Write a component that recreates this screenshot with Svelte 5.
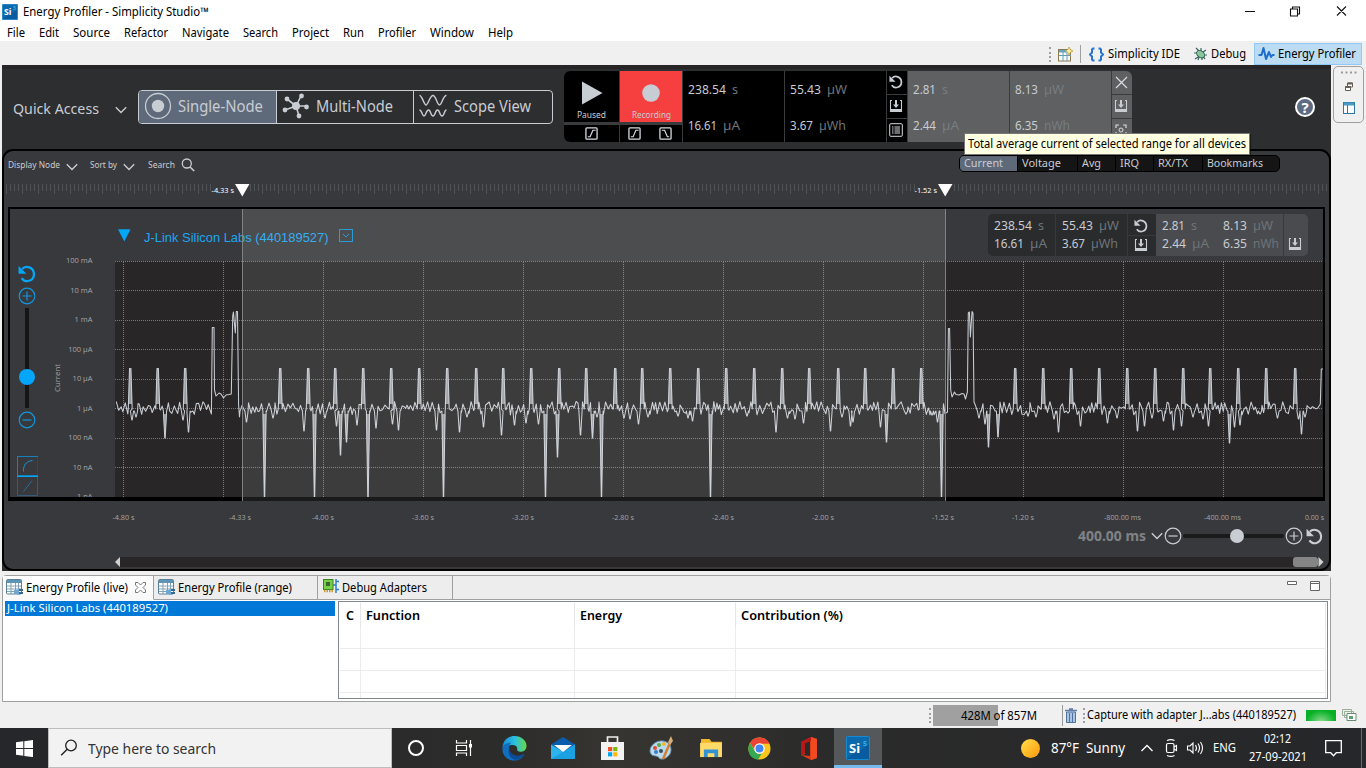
<script>
  // Squeezes or widens a run of text to the width its slot allows.
  function fit(node, width) {
    const exact = node.getBoundingClientRect().width;
    if (!exact || !width) return;
    node.style.transform = `scaleX(${width / exact})`;
    node.style.marginRight = `${width - exact}px`;
  }

  const menus = [['File', 18, 14], ['Edit', 20, 14], ['Source', 37, 14], ['Refactor', 44, 14], ['Navigate', 47, 14], ['Search', 35, 14], ['Project', 37, 14], ['Run', 21, 14], ['Profiler', 38, 14], ['Window', 44, 14], ['Help', 25, 0]];
  const series = [['Current', 58, 39], ['Voltage', 60, 39], ['Avg', 38, 19], ['IRQ', 38, 19], ['RX/TX', 49, 30], ['Bookmarks', 77, 56]];
  const yLabels = ['100 mA', '10 mA', '1 mA', '100 µA', '10 µA', '1 µA', '100 nA', '10 nA', '1 nA'];
  const yLines = [261.5, 290.5, 320.5, 349.5, 379.5, 408.5, 438.5, 467.5];
  const xLines = Array.from({ length: 12 }, (_, i) => 123.5 + i * 100);
  const times = [['-4.80 s', 123.5, 22], ['-4.33 s', 240, 22], ['-4.00 s', 323, 22], ['-3.60 s', 423, 22], ['-3.20 s', 523, 22], ['-2.80 s', 623, 22], ['-2.40 s', 723, 22], ['-2.00 s', 823, 22], ['-1.52 s', 943, 22], ['-1.20 s', 1023, 22], ['-800.00 ms', 1122.5, 37], ['-400.00 ms', 1222.5, 37], ['0.00 s', 1314.5, 19]];
  const ticks = Array.from({ length: 331 }, (_, i) => i);

  const peaks = [130, 157.5, 185, 280, 308, 335, 363, 391, 419, 447, 476, 503, 531, 559, 586, 615, 642, 670, 698, 726, 754, 782, 809, 838, 865, 893, 921, 1015, 1043, 1071, 1099, 1127, 1155, 1183, 1210, 1238, 1266, 1295];
  const dips = [[132, 420], [136, 417], [165, 438], [183, 420], [188.5, 432], [246.5, 422], [264.5, 497], [273, 418], [304, 431], [314.5, 497], [325, 418], [336.5, 426], [340.5, 455], [346.5, 442], [357, 425], [368, 497], [376, 428], [392.5, 424], [398.5, 430], [436.5, 430], [443.5, 497], [459.5, 432], [467, 417], [483.5, 427], [501.5, 435], [514.5, 425], [526, 423], [538.5, 424], [545.5, 497], [557.5, 457], [580.5, 435], [592.5, 438], [597, 417], [601.5, 497], [624, 418], [630, 419], [638.5, 424], [648, 417], [678, 416], [688, 418], [692.5, 421], [710.5, 497], [747, 416], [776, 432], [787.5, 418], [795, 419], [803.5, 423], [830.5, 431], [842, 417], [850.5, 426], [853, 422], [880.5, 427], [886.5, 442], [906, 414], [932, 415], [937.5, 422], [941.5, 497], [979, 418], [985, 424], [988.5, 447], [998, 437], [1028, 416], [1036, 417], [1054, 419], [1058.5, 432], [1068, 413], [1080.5, 426], [1107.5, 423], [1117, 418], [1137.5, 431], [1144.5, 426], [1152, 418], [1163.5, 421], [1173.5, 430], [1181.5, 426], [1193, 417], [1203, 419], [1208.5, 426], [1229.5, 443], [1234.5, 427], [1240, 425], [1260, 414], [1277.5, 418], [1298.5, 419], [1301.5, 434], [1305, 417]];

  // The current trace: quiet baseline around 1 µA, advertising peaks, sleep dips.
  function buildTrace() {
    let seed = 4187;
    const rnd = () => (seed = (seed * 16807) % 2147483647) / 2147483647;
    const events = [
      ...peaks.map((x) => ({ from: x - 2, to: x + 3, pts: [[x - 1.7, 409], [x - 0.5, 368.5], [x + 0.9, 368.5], [x + 2.2, 409]] })),
      ...dips.map(([x, y]) => ({ from: x - 2, to: x + 2, pts: [[x - 1.6, 411], [x - 0.2, y], [x + 0.2, y], [x + 1.6, 411]] })),
      { from: 210, to: 240, pts: [[211.4, 414], [212.3, 327.5], [214, 327.5], [214.5, 390], [216, 396], [219, 393], [221, 394], [223.5, 398], [226, 395], [229, 394.5], [231.3, 394], [232.7, 316], [233.4, 312], [235.3, 333], [236.3, 311.5], [237.5, 311.5], [238.6, 405], [239.5, 417]] },
      { from: 946, to: 975, pts: [[947.5, 412], [948.4, 328.5], [949.6, 328.5], [950.7, 390], [952, 397], [954.5, 392], [956, 394.5], [959, 395], [962, 393.5], [964, 394], [965.5, 399], [967.4, 392], [968.3, 313], [969.4, 312], [970.4, 337], [972, 311.5], [973, 313], [974, 402]] }
    ].sort((a, b) => a.from - b.from);
    const out = [];
    let x = 116.3;
    let high = true;
    for (const e of events) {
      while (x < e.from) {
        out.push([x, high ? 401.5 + rnd() * 5.5 : 407.5 + rnd() * 7.5]);
        high = rnd() < 0.82 ? !high : high;
        x += 1.3 + rnd() * 1.5;
      }
      out.push(...e.pts);
      x = Math.max(x, e.to);
    }
    while (x < 1319) {
      out.push([x, 405 + rnd() * 4]);
      x += 1.8;
    }
    out.push([1320.3, 404], [1321.3, 369], [1323, 369]);
    return 'M' + out.map((p) => p[0].toFixed(1) + ' ' + p[1].toFixed(1)).join('L');
  }
  const trace = buildTrace();
  const stems = peaks.map((x) => `M${x - 1.6} 404 ${x - 0.6} 368h1.700L${x + 2.1} 404z`).join('')
    + dips.filter((d) => d[1] > 435).map(([x, y]) => `M${x - 1.7} 414L${x - 0.3} ${y}h.6L${x + 1.7} 414z`).join('');
</script>

{#snippet t(text, w)}<span class="fit" use:fit={w}>{text}</span>{/snippet}

{#snippet reading(value, unit, vw, uw)}<span class="reading">{@render t(value, vw)}<span class="unit">{@render t(unit, uw)}</span></span>{/snippet}

{#snippet chevron()}<svg width="12" height="8" viewBox="0 0 12 8"><path d="M.8 1.2 6 6.4l5.2-5.2" fill="none" stroke="currentColor" stroke-width="1.4" /></svg>{/snippet}

{#snippet undo(size)}<svg width={size} height={size} viewBox="0 0 16 16"><path d="M3.6 3.6C7-.2 14 2 14.200 8c0 6.300-7.600 8.600-11 3.600" fill="none" stroke="currentColor" stroke-width="2" /><path d="M.5.8v7h7z" fill="currentColor" /></svg>{/snippet}

{#snippet save()}<svg width="14" height="14" viewBox="0 0 14 14"><path d="M3 1.500H1.500v11h11v-11H11" fill="none" stroke="currentColor" stroke-width="1.100" /><path d="M1 10h12v3H1zM6 1h2v4.500h2L7 9 4 5.500h2z" fill="currentColor" /></svg>{/snippet}

{#snippet edge(falling)}<svg width="13" height="13" viewBox="0 0 14 14"><rect x="1" y="1" width="12" height="12" rx="1" fill="none" stroke="#d7dae0" stroke-width="1.400" /><path d={falling ? 'M3 3.500h3l3 7h2' : 'M3 10.500h2.500l3-7h3'} fill="none" stroke="#d7dae0" stroke-width="1.300" /></svg>{/snippet}

{#snippet circle(plus)}<svg width="18" height="18" viewBox="0 0 18 18"><circle cx="9" cy="9" r="7.800" fill="none" stroke="currentColor" stroke-width="1.200" /><path d={plus ? 'M4.500 9h9M9 4.500v9' : 'M4.500 9h9'} stroke="currentColor" stroke-width="1.200" /></svg>{/snippet}

{#snippet tableIcon()}<svg width="17" height="17" viewBox="0 0 17 17"><rect x=".5" y=".5" width="15" height="14.500" rx="1" fill="#fff" stroke="#5a7f96" /><path d="M1 1h14v3H1z" fill="#5c95b5" /><path d="M1 7h14M1 10h14M1 12.500h9M5 4v11M9.500 4v11M12.500 4v6" stroke="#83a3b5" stroke-width="1" /><path d="M8 11h3l2-2v7l-2-1H8z" fill="#6ca6d5" /><path d="M13 11h4M13 14h4" stroke="#356b91" stroke-width="2" /></svg>{/snippet}

{#snippet siLogo(size)}<svg width={size} height={size} viewBox="0 0 24 24"><rect x=".5" y=".5" width="23" height="23" rx="1" fill="#075b9e" stroke="#1789d1" /><path d="M1 1h22v8L1 22z" fill="#147abd" opacity=".45" /><text x="3" y="16.500" font-family="Noto Sans, sans-serif" font-weight="bold" font-size="13" fill="#fff">Si</text><text x="17" y="9.500" font-family="Noto Sans, sans-serif" font-weight="bold" font-size="7" fill="#31aee9">5</text></svg>{/snippet}

<div class="screen">
  <header class="title">
    {@render siLogo(16)}
    <span class="caption">{@render t('Energy Profiler - Simplicity Studio™', 186)}</span>
    <svg class="winctl" width="110" height="22" viewBox="1244 0 110 22"><path d="M1245 10.500h10M1337 5.500l9 9m0-9l-9 9M1290.500 8h7v7h-7zM1292.500 8V6h7v7h-2" fill="none" stroke="#111" stroke-width="1.100" /></svg>
  </header>
  <nav class="menu">
    {#each menus as [name, w, gap]}<span style:margin-right="{gap}px">{@render t(name, w)}</span>{/each}
  </nav>
  <div class="perspectives">
    <span class="grip"></span>
    <svg class="newp" width="15" height="15" viewBox="0 0 15 15"><rect x=".5" y="2.500" width="12" height="11.500" fill="#f7fbff" stroke="#8a7a4d" /><path d="M1 3h8v2.500H1z" fill="#62a4c7" /><path d="M1 8.500h12M5 5v9M9 5v9" stroke="#699cb2" /><path d="m11 0 1.300 2.700L15 4l-2.700 1.300L11 8 9.700 5.300 7 4l2.700-1.300z" fill="#fff3a8" stroke="#ba942e" stroke-width=".7" /></svg>
    <span class="vr"></span>
    <svg class="braces" width="15" height="15" viewBox="0 0 15 15"><path d="M5.500 1.500H4L3 2.500v3L1 7.500l2 2v3l1 1h1.500M9.500 1.500H11l1 1v3l2 2-2 2v3l-1 1H9.500" fill="none" stroke="#2576d2" stroke-width="2" /></svg>
    {@render t('Simplicity IDE', 72)}
    <svg class="bug" width="15" height="14" viewBox="0 0 15 14"><path d="M3 1l3 3M1 6h4M2 12l3-2M8 1v3M13 3l-3 2M14 8h-4M9 13v-3M5 13l1-3M12 12l-2-3" stroke="#3d6360" stroke-width="1.200" /><ellipse cx="7.600" cy="7.200" rx="4.400" ry="3.200" transform="rotate(38 7.600 7.200)" fill="#8cc59b" stroke="#31665a" /></svg>
    {@render t('Debug', 35)}
    <span class="active">
      <svg width="17" height="16" viewBox="0 0 17 16"><path d="M.5 9h3L5.500 2 8 13l3-7 2 5 1.500-2H16.500" fill="none" stroke="#1d6ecf" stroke-width="2" stroke-linejoin="round" /></svg>
      {@render t('Energy Profiler', 78)}
    </span>
  </div>

  <div class="workspace">
    <main class="profiler">
      <div class="toolbar">
        <div class="quick">{@render t('Quick Access', 86)}<i>{@render chevron()}</i></div>
        <div class="modes">
          <div class="mode on">
            <svg width="28" height="28" viewBox="0 0 28 28"><circle cx="14" cy="14" r="12.500" fill="none" stroke="#c8ccd3" stroke-width="1.300" /><circle cx="14" cy="14" r="6.200" fill="#c8ccd3" /></svg>
            {@render t('Single-Node', 85)}
          </div>
          <div class="mode">
            <svg width="28" height="28" viewBox="0 0 28 28"><path d="M14 14 5 7M14 14l5-10M14 14h11M14 14l3 10M14 14 3 18" stroke="#c8ccd3" stroke-width="1.600" /><g fill="#c8ccd3"><circle cx="14" cy="14" r="4" /><circle cx="5" cy="7" r="2.400" /><circle cx="19.500" cy="4" r="2.400" /><circle cx="24.500" cy="15" r="2.400" /><circle cx="17" cy="24" r="2.400" /><circle cx="3" cy="18" r="2.400" /></g></svg>
            {@render t('Multi-Node', 77)}
          </div>
          <div class="mode">
            <svg width="28" height="28" viewBox="0 0 28 28"><path d="M.5 3.500C3 3 5 13 7 13S11 3.500 14 3.500 18 13 20.500 13 24 3 27.500 3.500M.5 18c2.500 0 2.500 6 4.500 6s2-6 4.500-6 2 6 4.500 6 2-6 4.500-6 2 6 4.500 6 2-6 4.500-6" fill="none" stroke="#c8ccd3" stroke-width="1.400" /></svg>
            {@render t('Scope View', 77)}
          </div>
        </div>
        <div class="record">
          <div class="states">
            <div class="state paused"><svg width="22" height="24" viewBox="0 0 22 24"><path d="M1 .5v23L21.500 12z" fill="#c8ccd3" /></svg>{@render t('Paused', 29)}</div>
            <div class="state rec"><svg width="22" height="24" viewBox="0 0 22 24"><circle cx="11" cy="12" r="8.800" fill="#c8ccd3" /></svg>{@render t('Recording', 39)}</div>
            <div class="trig">{@render edge(false)}</div>
            <div class="trig two">{@render edge(false)}{@render edge(true)}</div>
          </div>
          <div class="total">{@render reading('238.54', 's', 38, 6)}{@render reading('16.61', 'µA', 29, 17)}</div>
          <div class="total">{@render reading('55.43', 'µW', 31, 20)}{@render reading('3.67', 'µWh', 23, 27)}</div>
          <div class="acts"><div>{@render undo(14)}</div><div>{@render save()}</div><div><svg width="14" height="14" viewBox="0 0 14 14"><rect x=".7" y=".7" width="12.600" height="12.600" rx="1" fill="none" stroke="#d7dae0" /><path d="M3 4h1.500M3 6h1.500M3 8h1.500M3 10h1.500M5.500 4H11M5.500 6H11M5.500 8H11M5.500 10H11" stroke="#d7dae0" /></svg></div></div>
          <div class="total range">{@render reading('2.81', 's', 23, 6)}{@render reading('2.44', 'µA', 23, 17)}</div>
          <div class="total range">{@render reading('8.13', 'µW', 23, 20)}{@render reading('6.35', 'nWh', 23, 26)}</div>
          <div class="acts range"><div><svg width="13" height="13" viewBox="0 0 13 13"><path d="m1 1 11 11M12 1 1 12" stroke="#d7dae0" stroke-width="1.200" /></svg></div><div>{@render save()}</div><div><svg width="12" height="12" viewBox="0 0 12 12"><path d="M4 1H1v3M8 1h3v3M1 8v3h3M11 8v3H8" fill="none" stroke="#d7dae0" stroke-width="1.200" /><circle cx="6" cy="6" r="2" fill="none" stroke="#d7dae0" /></svg></div></div>
        </div>
        <div class="help">?</div>
      </div>

      <section class="panel">
        <div class="filters">
          {@render t('Display Node', 52)}<i>{@render chevron()}</i>
          <span class="sort">{@render t('Sort by', 27)}</span><i>{@render chevron()}</i>
          <span class="find">{@render t('Search', 27)}</span>
          <svg class="lens" width="14" height="14" viewBox="0 0 14 14"><circle cx="5.800" cy="5.500" r="4.500" fill="none" stroke="#c8ccd3" stroke-width="1.300" /><path d="m9 9 4.200 4" stroke="#c8ccd3" stroke-width="1.700" /></svg>
          <div class="series">
            {#each series as [name, w, tw], i}<div class:on={i === 0} style:width="{w}px">{@render t(name, tw)}</div>{/each}
          </div>
        </div>
        <svg class="ruler" width="1325" height="26" viewBox="4 181 1325 26">
          {#each ticks as k}{#if !(k > 51 && k < 61) && !(k > 227 && k < 237)}<path d="M{6.5 + k * 4} 184v{k % 4 ? 7 : 10}" stroke="#515256" />{/if}{/each}
          <path d="M235 184h14.500L242.300 196.500z M938 184h14.500l-7.300 12.500z" fill="#fff" />
          <text x="211.500" y="193" textLength="22.500" lengthAdjust="spacingAndGlyphs" class="mark">-4.33 s</text>
          <text x="914.500" y="193" textLength="22.500" lengthAdjust="spacingAndGlyphs" class="mark">-1.52 s</text>
        </svg>

        <div class="chart">
          <svg class="plot" width="1313" height="292" viewBox="10 209 1313 292">
            <path d="M10 209h1313v288H10z" fill="#38393c" />
            <path d="M115 261h1208v236H115z" fill="#282627" />
            <path d="M118 229.300h12.500L124.300 241.500z" fill="#04a6fa" />
            <text x="144" y="241.500" class="device" textLength="184.500" lengthAdjust="spacingAndGlyphs">J-Link Silicon Labs (440189527)</text>
            <rect x="339.500" y="229.500" width="13" height="12" fill="none" stroke="#158fd3" /><path d="m343 234 3 3 3-3" fill="none" stroke="#158fd3" />
            <g stroke="#79787a" stroke-dasharray="1 1">
              {#each yLines as y}<path d="M115 {y}h1208" />{/each}
              {#each xLines as x}<path d="M{x} 262v235" />{/each}
            </g>
            <path d={stems} fill="#989b9e" />
            <path d={trace} fill="none" stroke="#c9ced4" stroke-width="1.050" stroke-linejoin="round" />
            {#each yLabels as label, i}<text x="92.500" y={263 + i * 29.5} text-anchor="end" class="scale">{label}</text>{/each}
            <text transform="translate(59.500 392) rotate(-90)" class="scale" textLength="28" lengthAdjust="spacingAndGlyphs">Current</text>
            <path d="M10 497h1313v4H10z" fill="#000" />
            <path d="M242 209h704v292H242z" fill="#fff" opacity=".1" />
            <path d="M242.500 209v292M945.500 209v292" stroke="#808183" />
          </svg>
          <div class="zoomer">
            {@render undo(18)}
            {@render circle(true)}
            <div class="vtrack"><b></b></div>
            {@render circle(false)}
            <div class="curves">
              <svg width="21" height="20" viewBox="0 0 21 20"><rect x=".5" y=".5" width="20" height="19" fill="none" stroke="#1680bf" /><path d="M20.500 1v18" stroke="#443870" /><path d="M6.500 15.500C6 10 9 5 15.500 4.500" fill="none" stroke="#1496df" /></svg>
              <svg width="21" height="20" viewBox="0 0 21 20"><path d="M.5 0v19.500h20V0" fill="none" stroke="#355b7b" /><path d="M0 .5h21" stroke="#04a6fa" /><path d="M6.500 15.500 15 4.500" stroke="#276d99" /></svg>
            </div>
          </div>
          <div class="readout">
            <div class="cell c1">{@render reading('238.54', 's', 38, 6)}{@render reading('16.61', 'µA', 30, 17)}</div>
            <div class="cell c2">{@render reading('55.43', 'µW', 31, 20)}{@render reading('3.67', 'µWh', 23, 27)}</div>
            <div class="tools"><div>{@render undo(14)}</div><div>{@render save()}</div></div>
            <div class="cell lit c3">{@render reading('2.81', 's', 23, 6)}{@render reading('2.44', 'µA', 24, 17)}</div>
            <div class="cell lit c4">{@render reading('8.13', 'µW', 24, 20)}{@render reading('6.35', 'nWh', 24, 26)}</div>
            <div class="keep">{@render save()}</div>
          </div>
        </div>

        <svg class="axis" width="1325" height="24" viewBox="4 501 1325 24">
          {#each times as [label, x, w]}<text {x} y="519.800" text-anchor="middle" textLength={w} lengthAdjust="spacingAndGlyphs" class="scale">{label}</text>{/each}
        </svg>
        <div class="hzoom">
          <strong>{@render t('400.00 ms', 68)}</strong><i>{@render chevron()}</i>
          {@render circle(false)}<div class="htrack"><b></b></div>{@render circle(true)}
          <span class="hundo">{@render undo(17)}</span>
        </div>
        <div class="scroll"><svg width="5" height="10" viewBox="0 0 5 10"><path d="M5 0v10L0 5z" fill="#d0d0d0" /></svg><div class="track"><b></b></div><svg width="6" height="10" viewBox="0 0 6 10"><path d="M.5 0v10l5-5z" fill="#d0d0d0" /></svg></div>
      </section>
      <div class="tooltip">{@render t('Total average current of selected range for all devices', 278)}</div>
    </main>
    <aside>
      <div class="dock">
        <svg width="29" height="56" viewBox="1334 67 29 56"><path d="M1341 72.500h16" stroke="#999" stroke-width="2" stroke-dasharray="2 2.500" /><g fill="#fff" stroke="#665f57"><path d="M1347.500 83h5v4h-5z" /><path d="M1347.500 83.500h5" stroke-width="2" /><path d="M1345.500 86.500h5v4h-5z" /><path d="M1345.500 87h5" stroke-width="2" /></g><rect x="1343.500" y="102.500" width="11" height="11" fill="#fff" stroke="#2e779f" /><path d="M1344 104h10" stroke="#499bc4" stroke-width="3" /><path d="M1347.500 105v8" stroke="#2e779f" /></svg>
      </div>
    </aside>
  </div>

  <div class="views">
    <div class="tabs">
      <div class="tab live">{@render tableIcon()}{@render t('Energy Profile (live)', 102)}<svg class="x" width="11" height="11" viewBox="0 0 11 11"><path d="M.500.500h2.500L5.500 3 8 .5h2.500V3L8 5.500 10.500 8v2.500H8L5.500 8 3 10.500H.5V8L3 5.500.5 3z" fill="#fff" stroke="#777" /></svg></div>
      <div class="tab rng">{@render tableIcon()}{@render t('Energy Profile (range)', 114)}</div>
      <div class="tab dbg"><svg width="16" height="15" viewBox="0 0 16 15"><rect x=".5" y=".5" width="9.500" height="10" fill="#78cf43" stroke="#368425" /><rect x="3" y="3" width="4" height="4" fill="#3d653b" /><path d="M1 12h9" stroke="#c69b31" stroke-width="2.500" stroke-dasharray="1.500 1" /><path d="M13 0v14M10 6h3M13 2.500h3M13 10.500h3" stroke="#2c80cd" stroke-width="1.500" /></svg>{@render t('Debug Adapters', 85)}</div>
      <svg class="minmax" width="34" height="12" viewBox="0 0 34 12"><path d="M.500 1.500h9v3h-9zM23.500 1.500h9v9h-9zM23.500 3.500h9" fill="#fff" stroke="#666" /></svg>
    </div>
    <div class="content">
      <div class="list"><div class="picked">{@render t('J-Link Silicon Labs (440189527)', 161)}</div></div>
      <div class="grid">
        <div class="head"><span>{@render t('C', 8)}</span><span>{@render t('Function', 54)}</span><span>{@render t('Energy', 42)}</span><span>{@render t('Contribution (%)', 102)}</span></div>
        {#each [0, 1, 2, 3] as r}<div class="row"><span></span><span></span><span></span><span></span></div>{/each}
      </div>
    </div>
  </div>

  <div class="status">
    <span class="grip"></span>
    <div class="heap">{@render t('428M of 857M', 76)}</div>
    <svg class="bin" width="12" height="15" viewBox="0 0 12 15"><path d="M0 2.500h12M4 1h4" stroke="#5d7fa8" stroke-width="1.500" /><path d="M1.500 4h9v10.500h-9z" fill="#aac5e2" stroke="#4f739e" /><path d="M4.500 5v9M7.500 5v9" stroke="#4f739e" /></svg>
    <span class="grip"></span>
    <span class="job">{@render t('Capture with adapter J...abs (440189527)', 209)}</span>
    <div class="progress"></div>
    <svg width="15" height="12" viewBox="0 0 15 12"><path d="M.500.500h9v6h-9zM2.500 2.500h9v6h-9z" fill="#edf2ed" stroke="#9aae9a" /><path d="M5 4.500h9v7H5z" fill="#fff" stroke="#688a72" /><path d="M7 7h4v3H7z" fill="#59a36b" /></svg>
  </div>

  <footer>
    <div class="start"><svg width="17" height="17" viewBox="0 0 17 17"><path d="M0 2.300 7.300 1.300v6.800H0zM8.300 1.200 17 0v8.100H8.300zM0 9h7.300v6.800L0 14.800zM8.300 9H17v8.100l-8.700-1.200z" fill="#fff" /></svg></div>
    <div class="search"><svg width="18" height="18" viewBox="0 0 18 18"><circle cx="11" cy="6.500" r="5.300" fill="none" stroke="#222" stroke-width="1.300" /><path d="m7.200 10.300-6 6" stroke="#222" stroke-width="1.400" /></svg>{@render t('Type here to search', 128)}</div>
    <div class="app"><svg width="18" height="18" viewBox="0 0 18 18"><circle cx="9" cy="9" r="7" fill="none" stroke="#fff" stroke-width="2" /></svg></div>
    <div class="app view"><svg width="18" height="18" viewBox="0 0 18 18"><path d="M1.500 1v3h10V1M1.500 17v-3h10v3M1.500 6.500h10v5h-10zM15.500 1v16" fill="none" stroke="#fff" stroke-width="1.200" /><path d="M14 5h3v3.500h-3z" fill="#fff" /></svg></div>
    <div class="app"><svg width="25" height="25" viewBox="0 0 24 24"><defs><linearGradient id="ed" x1="0" x2="1"><stop stop-color="#168bd5" /><stop offset=".5" stop-color="#29bfe2" /><stop offset="1" stop-color="#68d846" /></linearGradient></defs><path d="M.5 11C1 4 6 0 12 0c7 0 12 5 11.500 10-.5 4-3 5-6 5-2 0-3-1-3-2 1-4-4-5-7-4C4 9 2 12 .5 11z" fill="url(#ed)" /><path d="M.5 12C1 8 5 6 9 6.500c-4 3-3 11 4 12.500 4 1 7-1 8.500-2C19 23 13 24.500 8 23S0 17 .5 12z" fill="#126fc0" /><path d="M9.500 8.500C5 12 8 19 14 19c3 0 5-1 7.500-2-3 5-7 6.500-10 5.500C5 20 5 11 9.500 8.500z" fill="#0b4b97" /></svg></div>
    <div class="app"><svg width="24" height="22" viewBox="0 0 24 22"><path d="M0 7.500 12 0l12 7.500V22H0z" fill="#0b5cad" /><path d="M0 7.500 12 15l12-7.500V22H0z" fill="#2bb4ed" /><path d="M24 7.500V22H0z" fill="#1296dc" opacity=".65" /><path d="M3 8h18l-9 7z" fill="#fff" /></svg></div>
    <div class="app"><svg width="23" height="24" viewBox="0 0 23 24"><path d="M6.500 8V1h10v7" fill="none" stroke="#eee" stroke-width="1.700" /><path d="M0 6h23v18H0z" fill="#f2f2f2" /><path d="M7 11h4.200v4.200H7z" fill="#f25022" /><path d="M12.200 11h4.200v4.200h-4.200z" fill="#7fba00" /><path d="M7 16.200h4.200v4.200H7z" fill="#00a4ef" /><path d="M12.200 16.200h4.200v4.200h-4.200z" fill="#ffb900" /></svg></div>
    <div class="app"><svg width="25" height="25" viewBox="0 0 25 25"><path d="M2 11C6 4 16 3 20 8s2 13-6 15c-4 1-4-3-7-3-6 0-7-5-5-9z" fill="#b9dbed" stroke="#6792ac" /><circle cx="6" cy="12" r="2" fill="#dc4a38" /><circle cx="10" cy="9" r="2" fill="#55aa4b" /><circle cx="15" cy="8" r="2" fill="#efb832" /><circle cx="7" cy="16" r="2" fill="#427cc3" /><circle cx="12" cy="15" r="2" fill="#374d5b" /><path d="m14 23 7-16" stroke="#d47e31" stroke-width="2.500" /><path d="m19 6 3-6 2 5-3 4z" fill="#d7ad7a" /></svg></div>
    <div class="app"><svg width="22" height="19" viewBox="0 0 23 20"><path d="M1 0h9l2 3h11v15H1z" fill="#f2b82b" /><path d="M0 4h23v15H0z" fill="#ffda68" /><path d="M4 19v-8h15v8h-4v-4H8v4z" fill="#3292d6" /></svg></div>
    <div class="app"><svg width="23" height="23" viewBox="0 0 24 24"><circle cx="12" cy="12" r="11.500" fill="#fac51c" /><path d="M2 6C7-2 19-1 22.500 7H12a5 5 0 0 0-4.500 7z" fill="#ea4335" /><path d="M2 6 7.500 15c2 3 5 3 7 2l-4 6.500C2 23-2 14 2 6z" fill="#34a853" /><circle cx="12" cy="12" r="5.500" fill="#fff" /><circle cx="12" cy="12" r="4.200" fill="#4285f4" /></svg></div>
    <div class="app"><svg width="19" height="23" viewBox="0 0 19 23"><path d="M2 5 12 0l6 2v19l-6 2-10-5 9 1V4L6 6v11l-4 1z" fill="#e33b18" /><path d="M2 5 12 0v4L6 6v10l-4 2z" fill="#b61717" /><path d="m12 0 6 2v19l-6 2z" fill="#ef4a20" /></svg></div>
    <div class="app current">{@render siLogo(24)}</div>
    <div class="tray">
      <i class="sun"></i>
      <span class="weather">{@render t('87°F  Sunny', 74)}</span>
    </div>
    <svg class="trayicons" width="66" height="22" viewBox="1140 737 66 22"><path d="m1141.500 751 5.500-5.500 5.500 5.500" fill="none" stroke="#fff" stroke-width="1.300" /><rect x="1166.500" y="743.500" width="7.500" height="9" rx="1.500" fill="none" stroke="#fff" stroke-width="1.200" /><path d="M1174 747l2.500-1.500v5L1174 749M1167 740.500q4-1.800 7.500 0M1167 755.500q4 1.800 7.500 0" fill="none" stroke="#fff" stroke-width="1.100" /><path d="M1187.500 746h2.500l3-3v10l-3-3h-2.500zM1195.500 745q2 3 0 6M1198 743.500q3 4.500 0 9M1200.500 742q4 6 0 12" fill="none" stroke="#fff" stroke-width="1.100" /></svg>
    <span class="lang">{@render t('ENG', 23)}</span>
    <div class="clock">{@render t('02:12', 27)}{@render t('27-09-2021', 58)}</div>
    <svg class="note" width="17" height="17" viewBox="0 0 17 17"><path d="M.7.700h15.600v12h-5L8.500 15.800 5.700 12.700h-5z" fill="none" stroke="#fff" stroke-width="1.300" /></svg>
    <span class="peek"></span>
  </footer>
</div>

<style>
  :global(body) { overflow: hidden; }
  .screen { width: 1366px; height: 768px; display: flex; flex-direction: column; overflow: hidden; background: #f0f0f0; color: #000; font: 12px/16px "Noto Sans", "Open Sans", sans-serif; }
  .screen *, .screen { box-sizing: border-box; }
  svg { display: block; flex: none; }
  i { font-style: normal; }
  .fit { display: inline-block; white-space: pre; transform-origin: 0 50%; flex: none; }
  .title { height: 23px; display: flex; align-items: center; background: #fff; padding-left: 2px; }
  .caption { margin-left: 5px; display: flex; }
  .winctl { margin-left: auto; margin-right: 12px; }
  .menu { height: 18px; display: flex; align-items: center; background: #fff; padding: 2px 0 0 7px; }
  .menu span { display: flex; }
  .perspectives { height: 24px; display: flex; align-items: center; padding: 2px 4px 0 1049px; }
  .grip { width: 3px; height: 15px; border-left: 2px dotted #a0a0a0; flex: none; }
  .newp { margin-left: 6px; }
  .vr { width: 1px; height: 18px; background: #a0a0a0; margin: 0 8px 0 7px; }
  .braces { margin-right: 4px; }
  .bug { margin: 0 3px 0 13px; }
  .active { margin-left: auto; height: 22px; width: 108px; padding-left: 3px; display: flex; align-items: center; gap: 3px; background: #bcdcf4; border: 1px solid #90c8f6; }

  .workspace { display: flex; height: 506px; }
  .profiler { width: 1329px; margin-left: 2px; background: #2d2e30; color: #c8ccd3; position: relative; }
  .toolbar { height: 84px; border-top: 4px solid #272526; display: flex; align-items: flex-start; }
  .quick { width: 136px; padding: 27px 0 0 11px; font-size: 15px; line-height: 24px; display: flex; align-items: center; }
  .quick i { margin: 4px 0 0 16px; }
  .modes { display: flex; width: 415px; height: 34px; margin-top: 21px; border: 1px solid #c8ccd3; border-radius: 4px; overflow: hidden; font-size: 15.500px; line-height: 24px; }
  .mode { width: 138px; display: flex; align-items: center; gap: 6px; padding: 0 0 2px 5px; border-right: 1px solid #c8ccd3; }
  .mode:last-child { border-right: 0; gap: 7px; }
  .mode.on { background: #5e6a7a; }
  .record { display: flex; margin: 2px 0 0 11px; width: 568px; height: 71px; border-radius: 6px; overflow: hidden; background: #3a3b3d; font-size: 13px; line-height: 18px; }
  .states { display: grid; grid-template: 51px 17px / 55px 62px; gap: 3px 1px; width: 118px; }
  .state { background: #000; display: flex; flex-direction: column; align-items: center; padding-top: 10px; font-size: 9px; line-height: 20px; }
  .state.rec { background: #f5403f; }
  .trig { background: #000; display: flex; justify-content: center; align-items: center; gap: 18px; }
  .trig.two { padding-right: 2px; }
  .total { width: 101px; margin-left: 1px; background: #000; display: flex; flex-direction: column; gap: 18px; padding: 9px 0 0 5px; }
  .reading { display: flex; gap: 6px; }
  .unit { color: #6d7479; }
  .acts { width: 20px; margin-left: 1px; display: flex; flex-direction: column; gap: 1px; }
  .acts div { flex: 1; background: #000; display: flex; align-items: center; justify-content: center; padding: 0 2px 1px 0; }
  .total.range, .acts.range div { background: #5e6062; }
  .range .unit { color: #777d80; }
  .help { width: 20px; height: 20px; margin: 28px 0 0 163px; border: 2px solid #fff; border-radius: 50%; background: #5e6c83; color: #fff; font: bold 15px/16px "Noto Sans", sans-serif; text-align: center; }

  .panel { height: 422px; border: 2px solid #000; border-radius: 11px; background: #38393c; overflow: hidden; }
  .filters { height: 30px; display: flex; align-items: center; padding: 0 0 3px 4px; font-size: 9px; }
  .filters i { margin: 4px 0 0 6px; }
  .sort { margin-left: 12px; display: flex; }
  .find { margin-left: 13px; display: flex; }
  .lens { margin-left: 6px; }
  .series { display: flex; margin: -3px 0 0 764px; height: 17px; border: 1px solid #000; border-radius: 5px; background: #151515; font-size: 11px; line-height: 14px; overflow: hidden; width: 321px; }
  .series > div { padding-left: 4px; border-right: 1px solid #000; display: flex; flex: none; }
  .series > .on { background: #5e6a7a; }
  .mark { font: 7.500px "Noto Sans", sans-serif; fill: #fff; }
  .chart { width: 1317px; height: 294px; margin-left: 4px; border: 2px solid #000; border-bottom: 0; position: relative; }
  .scale { font: 7.500px "Open Sans", "Noto Sans", sans-serif; fill: #a3a5a8; }
  .device { font: 13px "Liberation Sans", Arial, sans-serif; fill: #1ba6f0; }
  .zoomer { position: absolute; left: 6px; top: 56px; width: 22px; display: flex; flex-direction: column; align-items: center; color: #1296df; }
  .zoomer > :global(svg:first-child) { color: #04a6fa; }
  .zoomer > :global(svg:nth-child(2)) { margin-top: 4px; }
  .vtrack { width: 4px; height: 100px; margin: 3px 0; background: #161616; display: flow-root; }
  .vtrack b { display: block; width: 16px; height: 16px; margin: 61px 0 0 -6px; border-radius: 50%; background: #04a6fa; }
  .curves { margin-top: 27px; }
  .readout { position: absolute; left: 978px; top: 5px; width: 320px; height: 42px; display: flex; border-radius: 5px; overflow: hidden; background: #38393c; font-size: 12.500px; line-height: 18px; }
  .cell { background: #2a2b2d; padding: 3px 0 0 6px; }
  .c1 { width: 67px; margin-right: 1px; }
  .c2 { width: 71px; margin-right: 1px; }
  .tools { width: 28px; display: flex; flex-direction: column; gap: 1px; }
  .tools div { flex: 1; background: #2a2b2d; display: flex; align-items: center; justify-content: center; padding-right: 2px; }
  .tools div:last-child { padding-bottom: 2px; }
  .tools div:first-child { padding-top: 3px; }
  .cell.lit, .keep { background: #4a4b4e; }
  .c3 { width: 62px; }
  .c4 { width: 65px; padding-left: 5px; }
  .keep { flex: 1; margin-left: 1px; display: flex; justify-content: center; align-items: flex-end; padding: 0 2px 5px 0; }
  .hzoom { height: 22px; display: flex; align-items: center; padding-left: 1074px; font-size: 14px; }
  .hzoom strong { color: #808285; display: flex; }
  .hzoom i { margin: 0 1px 0 5px; }
  .htrack { width: 101px; height: 4px; margin: 0 1px; background: #1a1a1b; border-radius: 2px; display: flex; align-items: center; }
  .htrack b { width: 14px; height: 14px; margin-left: 47px; border-radius: 50%; background: #c8ccd3; }
  .hundo { margin-left: 3px; }
  .scroll { margin: 10px 0 0 111px; height: 10px; display: flex; }
  .track { width: 1198px; background: #282627; display: flex; justify-content: flex-end; }
  .track b { width: 25px; background: #858585; border-radius: 3px; }
  .tooltip { position: absolute; left: 962px; top: 68px; width: 286px; height: 22px; background: #ffffe1; border: 1px solid #777; color: #000; padding-left: 3px; line-height: 20px; box-shadow: 1px 1px 1px #0006; }
  aside { width: 35px; background: #f0f0f0; }
  .dock { margin: 1px 0 0 2px; width: 31px; height: 57px; border: 1px solid #a0a0a0; border-radius: 5px; background: #f0f0f0; }

  .views { margin: 4px 0 0 2px; width: 1329px; height: 127px; border: 1px solid #a0a0a0; border-radius: 4px 4px 0 0; background: #fff; }
  .tabs { height: 24px; display: flex; background: #ededed; position: relative; }
  .tab { display: flex; align-items: center; height: 24px; padding-left: 3px; gap: 3px; border-right: 1px solid #a0a0a0; border-bottom: 1px solid #a0a0a0; }
  .live { width: 151px; background: linear-gradient(#fff, #f8f8f8); border-bottom-color: #f8f8f8; }
  .x { margin-left: 4px; }
  .rng { width: 164px; padding-left: 4px; }
  .dbg { width: 135px; padding-left: 5px; }
  .dbg svg { margin-top: -3px; }
  .minmax { margin: 4px 9px 0 auto; }
  .tabs::after { content: ""; position: absolute; left: 450px; right: 0; bottom: 0; height: 1px; background: #a0a0a0; }
  .content { display: flex; padding: 1px 2px 0; height: 101px; }
  .list { width: 330px; }
  .picked { height: 15px; line-height: 14px; background: #0078d7; color: #fff; padding-left: 2px; font-size: 11.500px; }
  .grid { width: 990px; height: 98px; margin-left: 3px; border: 1px solid #828790; overflow: hidden; padding: 0 1px; }
  .head { display: flex; height: 25px; padding-top: 1px; }
  .head > span { border-right: 1px solid #e5e5e5; padding-left: 6px; line-height: 26px; font-weight: 600; }
  .head > span:nth-child(2) { padding-left: 5px; }
  .head > span:nth-child(1), .row span:nth-child(1) { width: 21px; }
  .head > span:nth-child(2), .row span:nth-child(2) { width: 214px; }
  .head > span:nth-child(3), .row span:nth-child(3) { width: 161px; }
  .head > span:nth-child(3), .head > span:nth-child(4) { padding-left: 5px; }
  .head > span:nth-child(4), .row span:nth-child(4) { width: 590px; }
  .row { display: flex; height: 22px; border-bottom: 1px solid #ececec; }
  .row span { border-right: 1px solid #ececec; }

  .status { height: 26px; display: flex; align-items: center; padding-left: 929px; }
  .heap { width: 130px; height: 21px; margin-left: 1px; padding-left: 3px; text-align: center; line-height: 21px; border-right: 1px solid #999; background: linear-gradient(90deg, #a0a0a0 65px, #f0f0f0 65px); }
  .bin { margin: 0 6px 0 2px; }
  .job { margin-left: 1px; display: flex; }
  .progress { width: 30px; height: 11px; margin: 0 6px 0 10px; background: radial-gradient(ellipse at 50% 110%, #8edc92, #06b025 70%); }

  footer { height: 40px; display: flex; align-items: center; background: linear-gradient(90deg, #26272a, #2c2c2b 37%, #373531 45%, #2b2b2b 60%, #26272a); color: #fff; }
  .start { width: 48px; display: flex; justify-content: center; }
  .search { width: 344px; height: 40px; background: #f2f2f2; border: 1px solid #bdbdbd; color: #333; display: flex; align-items: center; padding-left: 11px; gap: 10px; font-size: 15px; line-height: 20px; }
  .app { width: 49.100px; height: 40px; display: flex; align-items: center; justify-content: center; flex: none; padding-right: 1px; }
  .app.view { padding-right: 4px; }
  .app.current { width: 48px; background: #55585a; border-bottom: 3px solid #76b9ed; padding: 2px 0 0; }
  .tray { display: flex; align-items: center; margin-left: 139px; font-size: 13.500px; line-height: 20px; width: 119px; }
  .sun { width: 19px; height: 19px; border-radius: 50%; background: linear-gradient(135deg, #ffdf4a, #ff970a); flex: none; }
  .weather { margin-left: 11px; }
  .lang { margin-left: 7px; display: flex; }
  .clock { width: 60px; margin-left: 12px; display: flex; flex-direction: column; align-items: center; line-height: 18px; }
  .note { margin-left: 17px; }
  .peek { margin-left: auto; margin-right: 4px; height: 40px; width: 1px; background: #66686a; }
</style>
